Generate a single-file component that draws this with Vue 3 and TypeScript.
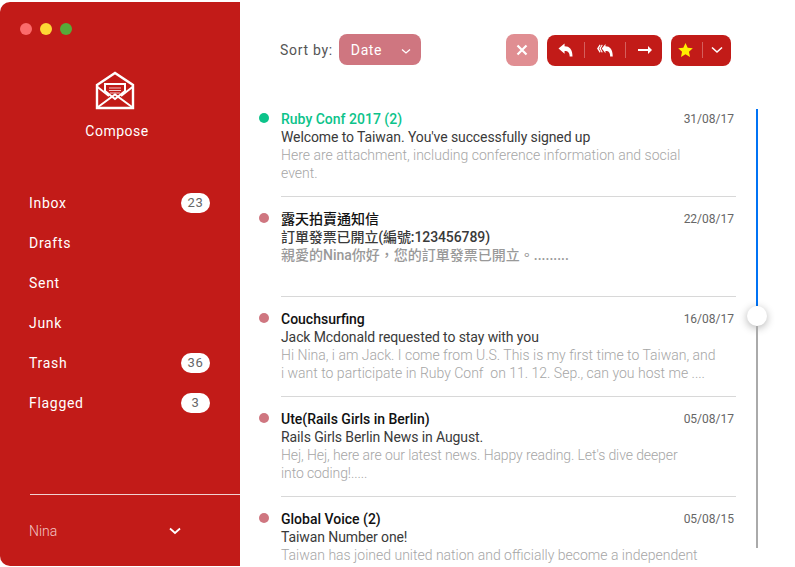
<template>
  <div class="app">
    <aside class="sidebar">
      <div class="lights">
        <span class="light red"></span>
        <span class="light yellow"></span>
        <span class="light green"></span>
      </div>
      <div class="compose">
        <svg width="40" height="40" viewBox="0 0 40 40" fill="none" stroke="#fff">
          <path d="M2 15 L20 3 L38 15 V38 H2 Z" stroke-width="2.4" />
          <path d="M2.5 17 L14 26 M37.5 17 L26 26 M3 37 L20 24.5 L37 37" stroke-width="2" />
          <path d="M10 21 V14 H30 V21 L20 29 Z" stroke-width="2" />
          <path d="M14 18 H26 M14 20.5 H26 M15 23 H25" stroke-width="1" stroke-opacity=".75" />
        </svg>
        <span>Compose</span>
      </div>
      <nav class="nav">
        <a v-for="item in folders" :key="item.name" class="nav-item">
          <span>{{ item.name }}</span>
          <span v-if="item.count" class="badge">{{ item.count }}</span>
        </a>
      </nav>
      <div class="account">
        <span>Nina</span>
        <svg width="12" height="8" viewBox="0 0 12 8" fill="none" stroke="#fff" stroke-width="1.8">
          <path d="M1 1.5 L6 6 L11 1.5" />
        </svg>
      </div>
    </aside>

    <main class="main">
      <header class="toolbar">
        <label class="sort-label">Sort by:</label>
        <div class="select">
          <span>Date</span>
          <svg width="10" height="7" viewBox="0 0 10 7" fill="none" stroke="#fff" stroke-width="1.3">
            <path d="M1 1.5 L5 5 L9 1.5" />
          </svg>
        </div>
        <button class="btn-close">
          <svg width="12" height="12" viewBox="0 0 12 12" stroke="#fff" stroke-width="2.2">
            <path d="M1.5 1.5 L10.5 10.5 M10.5 1.5 L1.5 10.5" />
          </svg>
        </button>
        <div class="group actions">
          <span class="cell reply">
            <svg width="15" height="14" viewBox="0 0 16 15" fill="#fff">
              <path d="M0.5 6 L7 0.5 V3.5 C12.5 3.5 15.5 7 15.5 14.5 H12.5 C12.5 10.5 11 8.5 7 8.5 V11.5 Z" />
            </svg>
          </span>
          <span class="cell reply-all">
            <svg width="16" height="14" viewBox="0 0 17 15" fill="#fff">
              <path d="M5 6 L9 1 V3.5 C14 3.5 16.8 7 16.8 14.5 H14 C14 10.5 13 8.5 9 8.5 V11 Z" />
              <path d="M2.8 1.5 L3.8 2.5 L1.8 6 L3.8 9.5 L2.8 10.5 L0 6 Z" />
              <path d="M5.2 1.5 L6 2.3 L4 6 L6 9.7 L5.2 10.5 L2.4 6 Z" />
            </svg>
          </span>
          <span class="cell forward">
            <svg width="14" height="8" viewBox="0 0 14 8" fill="#fff">
              <path d="M0 3 H10 V0 L14 4 L10 8 V5 H0 Z" />
            </svg>
          </span>
        </div>
        <div class="group favs">
          <span class="cell star">
            <svg width="15" height="14" viewBox="0 0 24 23" fill="#ffee00">
              <path d="M12 0 L15.6 8 L24 8.8 L17.7 14.5 L19.4 23 L12 18.6 L4.6 23 L6.3 14.5 L0 8.8 L8.4 8 Z" />
            </svg>
          </span>
          <span class="cell more">
            <svg width="12" height="8" viewBox="0 0 12 8" fill="none" stroke="#fff" stroke-width="1.6">
              <path d="M1 1.5 L6 6 L11 1.5" />
            </svg>
          </span>
        </div>
      </header>

      <section class="list">
        <article v-for="mail in mails" :key="mail.sender" class="mail" :class="{ unread: mail.unread, tight: mail.tight }" :lang="mail.cjk ? 'zh-TW' : 'en'">
          <span class="dot"></span>
          <div class="body">
            <div class="top">
              <strong class="sender">{{ mail.sender }}</strong>
              <time class="date">{{ mail.date }}</time>
            </div>
            <div class="subject" :class="{ cjk: mail.cjk }">{{ mail.subject }}</div>
            <div class="preview" :class="{ cjk: mail.cjk }">
              <div v-for="line in mail.preview" :key="line">{{ line }}</div>
            </div>
          </div>
        </article>
      </section>

      <div class="scroll">
        <div class="scroll-done"></div>
        <div class="scroll-thumb"></div>
        <div class="scroll-rest"></div>
      </div>
    </main>
  </div>
</template>

<script setup lang="ts">
interface Folder {
  name: string
  count?: number
}

interface Mail {
  sender: string
  date: string
  subject: string
  preview: string[]
  unread?: boolean
  cjk?: boolean
  tight?: boolean
}

const folders: Folder[] = [
  { name: 'Inbox', count: 23 },
  { name: 'Drafts' },
  { name: 'Sent' },
  { name: 'Junk' },
  { name: 'Trash', count: 36 },
  { name: 'Flagged', count: 3 },
]

const mails: Mail[] = [
  {
    sender: 'Ruby Conf 2017 (2)',
    date: '31/08/17',
    subject: "Welcome to Taiwan. You've successfully signed up",
    preview: ['Here are attachment, including conference information and social', 'event.'],
    unread: true,
  },
  {
    sender: '露天拍賣通知信',
    date: '22/08/17',
    subject: '訂單發票已開立(編號:123456789)',
    preview: ['親愛的Nina你好，您的訂單發票已開立。.........'],
    cjk: true,
  },
  {
    sender: 'Couchsurfing',
    date: '16/08/17',
    subject: 'Jack Mcdonald requested to stay with you',
    preview: [
      'Hi Nina, i am Jack. I come from U.S. This is my first time to Taiwan, and',
      'i want to participate in Ruby Conf  on 11. 12. Sep., can you host me ....',
    ],
  },
  {
    sender: 'Ute(Rails Girls in Berlin)',
    date: '05/08/17',
    subject: 'Rails Girls Berlin News in August.',
    preview: ["Hej, Hej, here are our latest news. Happy reading. Let's dive deeper", 'into coding!.....'],
    tight: true,
  },
  {
    sender: 'Global Voice (2)',
    date: '05/08/15',
    subject: 'Taiwan Number one!',
    preview: ['Taiwan has joined united nation and officially become a independent', 'country.'],
  },
]
</script>

<style>
html,
body {
  margin: 0;
  background: #fff;
  overflow: hidden;
}
</style>

<style scoped>
.app {
  display: flex;
  width: 795px;
  height: 567px;
  overflow: hidden;
  background: #fff;
  font-family: Roboto, "Noto Sans CJK TC", sans-serif;
  font-size: 14px;
}

.sidebar {
  display: flex;
  flex-direction: column;
  flex: none;
  box-sizing: border-box;
  width: 240px;
  height: 564px;
  margin-top: 2px;
  background: #c21b18;
  border-radius: 10px 0 0 10px;
  color: #fff;
}

.lights {
  display: flex;
  gap: 8px;
  padding: 21px 0 0 20px;
}

.light {
  width: 12px;
  height: 12px;
  border-radius: 50%;
}

.red { background: #fc6b6b; }
.yellow { background: #fdd835; }
.green { background: #55ab39; }

.compose {
  display: flex;
  flex-direction: column;
  align-items: center;
  margin: 35px 6px 0 0;
  letter-spacing: 0.5px;
}

.compose svg {
  margin: 0 4px 13px 0;
}

.nav {
  display: flex;
  flex-direction: column;
  margin-top: 44px;
  padding: 0 30px 0 29px;
}

.nav-item {
  display: flex;
  align-items: center;
  justify-content: space-between;
  height: 40px;
  letter-spacing: 0.7px;
}

.badge {
  width: 29px;
  border-radius: 10px;
  background: #fff;
  color: #666;
  font-size: 13px;
  line-height: 20px;
  text-align: center;
}

.account {
  display: flex;
  align-items: center;
  justify-content: space-between;
  margin: auto 0 0 30px;
  padding: 26px 59px 26px 0;
  height: 19px;
  border-top: 1px solid #f1d2d1;
  color: #f3c6c5;
  font-weight: 300;
}

.account span {
  margin-left: -1px;
}

.main {
  position: relative;
  flex: 1;
  min-width: 0;
}

.toolbar {
  display: flex;
  align-items: center;
  height: 97px;
  padding: 2px 0 0 40px;
  box-sizing: border-box;
  color: #555;
}

.sort-label {
  margin-right: 6px;
  letter-spacing: 0.7px;
}

.select {
  display: flex;
  align-items: center;
  justify-content: space-between;
  box-sizing: border-box;
  width: 82px;
  height: 31px;
  padding: 0 10px 0 12px;
  border-radius: 8px;
  background: #cf7680;
  color: #fff;
  letter-spacing: 0.6px;
}

.select svg {
  margin-top: 3px;
}

.btn-close {
  display: flex;
  align-items: center;
  justify-content: center;
  width: 32px;
  height: 32px;
  margin-left: 85px;
  padding: 0;
  border: 0;
  border-radius: 8px;
  background: #e08e92;
}

.group {
  display: flex;
  align-items: center;
  height: 31px;
  margin-top: 1px;
  margin-left: 9px;
  border-radius: 8px;
  background: #c21b18;
}

.cell {
  display: flex;
  flex: none;
  align-items: center;
  justify-content: center;
  box-sizing: border-box;
  height: 16px;
}

.cell + .cell {
  border-left: 1px solid rgba(255, 255, 255, 0.3);
}

.reply { width: 37px; }
.reply-all { width: 41px; }
.forward { width: 37px; padding-left: 3px; }
.star { width: 31px; padding-right: 2px; }
.more { width: 29px; }

.list {
  display: flex;
  flex-direction: column;
  padding-left: 19px;
  width: 496px;
  box-sizing: border-box;
}

.mail {
  display: flex;
  flex: none;
  height: 100px;
  padding-top: 13px;
  box-sizing: border-box;
}

.dot {
  flex: none;
  width: 10px;
  height: 10px;
  margin: 3px 12px 0 0;
  border-radius: 50%;
  background: #cf7680;
}

.unread .dot {
  background: #0cc38a;
}

.body {
  flex: 1;
  box-sizing: border-box;
  height: 87px;
  border-bottom: 1px solid #d8d8d8;
  line-height: 18px;
  color: #3a3a3a;
}

.top {
  display: flex;
  justify-content: space-between;
}

.sender {
  color: #111;
  font-weight: 500;
}

.unread .sender {
  color: #0cc38a;
}

.date {
  margin-right: 2px;
  color: #666;
  font-size: 12px;
}

.subject {
  letter-spacing: -0.1px;
}

.preview {
  color: #a6a6a6;
  font-weight: 300;
  white-space: pre;
}

.tight .preview {
  letter-spacing: -0.1px;
}

.subject.cjk,
.preview.cjk {
  font-weight: 500;
}

.preview.cjk {
  color: #999;
}

.scroll {
  position: absolute;
  top: 109px;
  left: 507px;
  display: flex;
  flex-direction: column;
  align-items: center;
  width: 20px;
  height: 439px;
}

.scroll-done {
  width: 2px;
  height: 197px;
  background: #0073f5;
}

.scroll-thumb {
  flex: none;
  width: 20px;
  height: 20px;
  border-radius: 50%;
  background: #fff;
  box-shadow: 0 2px 8px rgba(0, 0, 0, 0.3);
}

.scroll-rest {
  flex: 1;
  width: 2px;
  background: #aaa;
}
</style>
